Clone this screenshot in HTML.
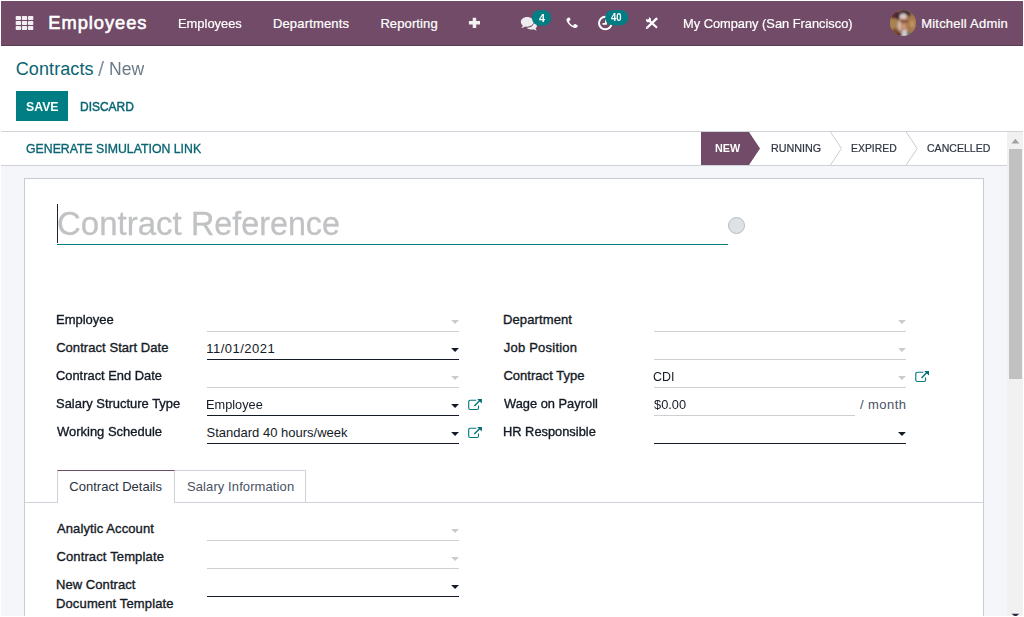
<!DOCTYPE html>
<html lang="en">
<head>
<meta charset="utf-8">
<title>Odoo - Contracts / New</title>
<style>
html,body{margin:0;padding:0;}
body{width:1024px;height:617px;overflow:hidden;background:#fff;position:relative;font-family:"Liberation Sans",sans-serif;}
.a{position:absolute;}
.t{position:absolute;white-space:nowrap;transform-origin:0 0;font-family:"Liberation Sans",sans-serif;}
#nav{left:1px;top:1px;width:1022px;height:44px;background:#714b67;border-bottom:1px solid #5b3c53;}
#bg{left:1px;top:166px;width:1006px;height:450px;background:#f5f6fa;}
#sheet{left:24px;top:178px;width:958px;height:437px;background:#fff;border:1px solid #c9ccd4;border-bottom:none;}
.hl{position:absolute;height:1px;}
.lt{background:#cfcfd2;}
.dk{background:#141a26;}
</style>
</head>
<body>
<div class="a" id="nav"></div>
<!-- control panel borders -->
<div class="hl" style="left:1px;top:131px;width:1022px;background:#cfd2d8;"></div>
<div class="hl" style="left:1px;top:165px;width:1006px;background:#cfd2d8;"></div>
<div class="a" id="bg"></div>
<div class="a" id="sheet"></div>

<!-- scrollbar -->
<div class="a" style="left:1007px;top:132px;width:16px;height:484px;background:#f1f1f1;"></div>
<div class="a" style="left:1009px;top:149px;width:13px;height:230px;background:#c1c1c1;"></div>
<svg class="a" style="left:1007px;top:132px;" width="16" height="484" viewBox="0 0 16 484">
<path d="M4.5 11.5 L8.4 6.8 L12.3 11.5 Z" fill="#a3a0a3"/>
<path d="M4.5 481.8 L12.4 481.8 L9.6 484 L7.3 484 Z" fill="#2a2a3a"/>
</svg>

<!-- navbar icons -->
<svg class="a" style="left:0;top:0;" width="1024" height="46" viewBox="0 0 1024 46">
<g fill="#f1eef1">
<rect x="15.7" y="15.9" width="5.3" height="4.2" rx="0.8"/><rect x="21.85" y="15.9" width="5.3" height="4.2" rx="0.8"/><rect x="28" y="15.9" width="5.3" height="4.2" rx="0.8"/>
<rect x="15.7" y="20.9" width="5.3" height="4.2" rx="0.8"/><rect x="21.85" y="20.9" width="5.3" height="4.2" rx="0.8"/><rect x="28" y="20.9" width="5.3" height="4.2" rx="0.8"/>
<rect x="15.7" y="25.9" width="5.3" height="4.2" rx="0.8"/><rect x="21.85" y="25.9" width="5.3" height="4.2" rx="0.8"/><rect x="28" y="25.9" width="5.3" height="4.2" rx="0.8"/>
</g>
<!-- plus -->
<path d="M472.7 17.700h3.500v3.300h3.800v3.500h-3.800v3.500h-3.500v-3.500h-3.800v-3.500h3.800z" fill="#f2f0f2"/>
<!-- comments -->
<g fill="#efecef">
<path d="M533.5 21.5 c1.9 0.7 3.5 2.2 3.5 4 c0 1.2 -0.6 2.2 -1.5 3 c0.3 0.8 0.8 1.4 1.4 1.9 c-1.3 0 -2.6 -0.4 -3.6 -1.1 c-0.6 0.1 -1.2 0.2 -1.8 0.2 c-2 0 -3.700 -0.7 -4.8 -1.800 c0.3 0 0.5 0 0.800 0 c3.700 0 6.300 -2.400 6.300 -5.200 c0 -0.350 -0.100 -0.700 -0.200 -1z"/>
<path d="M527.15 16.900 c3.500 0 6.350 2.200 6.350 4.950 s-2.850 4.950 -6.350 4.950 c-0.700 0 -1.400 -0.100 -2.000 -0.250 c-1.000 0.800 -2.400 1.300 -3.900 1.350 c0.700 -0.600 1.300 -1.400 1.600 -2.300 c-1.250 -0.900 -2.050 -2.250 -2.050 -3.750 c0 -2.750 2.850 -4.950 6.350 -4.950z"/>
</g>
<rect x="532" y="10" width="19" height="15.800" rx="7.900" fill="#017e84"/>
<!-- phone -->
<path d="M569.000 17.600 c-0.700 0.200 -2.000 0.800 -2.400 1.500 c-0.400 1.000 0.300 3.000 2.000 5.000 c1.800 2.200 4.400 3.900 6.300 3.900 c1.200 0 2.400 -0.900 2.800 -1.800 c0.200 -0.400 0.100 -0.700 -0.200 -0.900 l-2.300 -1.300 c-0.350 -0.200 -0.700 -0.100 -0.950 0.200 l-0.850 1.050 c-0.250 0.300 -0.600 0.300 -0.900 0.150 c-1.500 -0.800 -2.700 -2.000 -3.400 -3.500 c-0.150 -0.300 -0.100 -0.650 0.200 -0.900 l0.950 -0.750 c0.300 -0.250 0.400 -0.600 0.250 -0.950 l-0.900 -1.500 c-0.150 -0.250 -0.350 -0.300 -0.600 -0.200z" fill="#fff"/>
<!-- clock -->
<circle cx="605.300" cy="23.050" r="6.300" fill="none" stroke="#fff" stroke-width="2"/>
<path d="M605.100 19.500 h1.700 v5.300 h-4.300 v-1.700 h2.600z" fill="#fff"/>
<rect x="605.200" y="10" width="23" height="15.300" rx="7.650" fill="#017e84"/>
<!-- tools -->
<path d="M657.1 18.2 L647.3 27.5" stroke="#fff" stroke-width="2.4" fill="none"/>
<path d="M645.8 29 L646.4 26.6 L648.3 28.400 Z" fill="#fff"/>
<path d="M650 21.2 L657 27.8" stroke="#fff" stroke-width="2.1" fill="none"/>
<circle cx="648.5" cy="19.7" r="2.55" fill="#fff"/>
<circle cx="647.6" cy="18.200" r="1.4" fill="#714b67"/>
<!-- avatar -->
<defs><clipPath id="av"><circle cx="903" cy="23" r="13"/></clipPath>
<filter id="bl" x="-20%" y="-20%" width="140%" height="140%"><feGaussianBlur stdDeviation="0.8"/></filter></defs>
<g clip-path="url(#av)">
<rect x="889" y="9" width="28" height="28" fill="#9a7146"/>
<g filter="url(#bl)">
<rect x="889" y="19" width="8" height="10" fill="#a8824f"/>
<ellipse cx="894.500" cy="14.500" rx="4.500" ry="4" fill="#5a2a38"/>
<path d="M896.500 19 C896.500 12.500 900 10.500 904 10.500 C909 10.500 911 13 911 18 L908.500 18 C907.500 14.500 905.500 13.500 902.500 13.500 C900.500 13.500 899.500 15.500 899 20 Z" fill="#2c1d33"/>
<ellipse cx="903.200" cy="16.800" rx="3.600" ry="3.200" fill="#dcc7c4"/>
<ellipse cx="903" cy="25" rx="4.800" ry="6.500" fill="#b9825f"/>
<rect x="899" y="20.500" width="8.500" height="1.800" fill="#5a3030"/>
<ellipse cx="899.300" cy="26" rx="1.600" ry="5.500" fill="#d8c0b4"/>
<ellipse cx="903.500" cy="26.500" rx="1.500" ry="2" fill="#d0a080"/>
<path d="M902 31 L906.500 28.500 L907.500 37 L901 37 Z" fill="#cfcdd3"/>
<rect x="908.500" y="16" width="8" height="16" fill="#a97a4c"/>
<rect x="910" y="21" width="4" height="6" fill="#bd9468"/>
<ellipse cx="909" cy="34" rx="2.500" ry="1.600" fill="#4f6f70"/>
<ellipse cx="895.500" cy="32" rx="4" ry="3.500" fill="#7a4a35"/>
<ellipse cx="899" cy="35" rx="3" ry="2" fill="#5a2a30"/>
</g>
</g>
</svg>

<!-- SAVE button -->
<div class="a" style="left:16px;top:91px;width:52px;height:30px;background:#017e84;"></div>

<!-- statusbar -->
<svg class="a" style="left:690px;top:132px;" width="317" height="33" viewBox="690 132 317 33">
<path d="M701 132 H749 L760 148.500 L749 165 H701 Z" fill="#714b67"/>
<path d="M830.500 132 L841.500 148.500 L830.500 165" fill="none" stroke="#caccd2" stroke-width="1"/>
<path d="M906.200 132 L917.200 148.500 L906.200 165" fill="none" stroke="#caccd2" stroke-width="1"/>
</svg>

<!-- title -->
<div class="a" style="left:57px;top:204px;width:1px;height:39px;background:#1b2230;"></div>
<div class="hl" style="left:57px;top:244px;width:671px;background:#017e84;"></div>
<div class="a" style="left:728px;top:217px;width:15px;height:15px;border-radius:50%;background:#dde2e6;border:1px solid #b9babd;"></div>

<!-- field lines left -->
<div class="hl lt" style="left:207px;top:331px;width:252px;"></div>
<div class="hl dk" style="left:207px;top:359px;width:252px;"></div>
<div class="hl lt" style="left:207px;top:387px;width:252px;"></div>
<div class="hl dk" style="left:207px;top:415px;width:252px;"></div>
<div class="hl dk" style="left:207px;top:443px;width:252px;"></div>
<!-- field lines right -->
<div class="hl lt" style="left:654px;top:331px;width:252px;"></div>
<div class="hl lt" style="left:654px;top:359px;width:252px;"></div>
<div class="hl lt" style="left:654px;top:387px;width:252px;"></div>
<div class="hl lt" style="left:654px;top:415px;width:201px;"></div>
<div class="hl dk" style="left:654px;top:443px;width:252px;"></div>

<!-- carets and external link icons -->
<svg class="a" style="left:0;top:300px;" width="1024" height="317" viewBox="0 300 1024 317">
<defs><g id="ext" fill="none" stroke="#017780">
<path d="M8.3 2.3 H2.2 a1.5 1.5 0 0 0 -1.5 1.5 V10 a1.5 1.5 0 0 0 1.5 1.5 H9 a1.5 1.5 0 0 0 1.5 -1.5 V7.5" stroke-width="1.1"/>
<path d="M6.4 8 L12 2.3" stroke-width="1.5"/>
<path d="M9.2 0.9 H13.9 V5.4 Z" fill="#016a72" stroke="none"/>
</g></defs>
<use href="#ext" x="468" y="398"/>
<use href="#ext" x="468" y="426"/>
<use href="#ext" x="915.1" y="370"/>
<path d="M451.1 320 h7.9 l-3.95 4.1 z" fill="#c9cbce"/>
<path d="M451.1 348 h7.9 l-3.95 4.1 z" fill="#141a26"/>
<path d="M451.1 376 h7.9 l-3.95 4.1 z" fill="#c9cbce"/>
<path d="M451.1 404 h7.9 l-3.95 4.1 z" fill="#141a26"/>
<path d="M451.1 432 h7.9 l-3.95 4.1 z" fill="#141a26"/>
<path d="M451.1 529 h7.9 l-3.95 4.1 z" fill="#c9cbce"/>
<path d="M451.1 557 h7.9 l-3.95 4.1 z" fill="#c9cbce"/>
<path d="M451.1 585 h7.9 l-3.95 4.1 z" fill="#141a26"/>
<path d="M898.0 320 h7.9 l-3.95 4.1 z" fill="#c9cbce"/>
<path d="M898.0 348 h7.9 l-3.95 4.1 z" fill="#c9cbce"/>
<path d="M898.0 376 h7.9 l-3.95 4.1 z" fill="#c9cbce"/>
<path d="M898.0 432 h7.9 l-3.95 4.1 z" fill="#141a26"/>
</svg>

<!-- tabs -->
<div class="hl" style="left:25px;top:502px;width:958px;background:#cfd2d8;"></div>
<div class="a" style="left:57px;top:470px;width:116px;height:32px;background:#fff;border:1px solid #cfd2d8;border-top-color:#714b67;border-bottom:none;box-sizing:content-box;"></div>
<div class="a" style="left:175px;top:470px;width:130px;height:32px;border:1px solid #cfd2d8;border-left:none;border-bottom:none;"></div>

<!-- lines tab content -->
<div class="hl lt" style="left:207px;top:540px;width:252px;"></div>
<div class="hl lt" style="left:207px;top:568px;width:252px;"></div>
<div class="hl dk" style="left:207px;top:596px;width:252px;"></div>

<span class="t" style="left:48.37px;top:14.00px;font-size:18.3px;line-height:18.3px;color:#fff;letter-spacing:0.959px;-webkit-text-stroke:0.6px;">Employees</span>
<span class="t" style="left:177.89px;top:17.00px;font-size:13px;line-height:13px;color:#fff;transform:scaleX(0.9923);-webkit-text-stroke:0.22px;">Employees</span>
<span class="t" style="left:272.88px;top:17.00px;font-size:13px;line-height:13px;color:#fff;letter-spacing:0.170px;-webkit-text-stroke:0.22px;">Departments</span>
<span class="t" style="left:380.38px;top:17.00px;font-size:13px;line-height:13px;color:#fff;letter-spacing:0.110px;-webkit-text-stroke:0.22px;">Reporting</span>
<span class="t" style="left:682.70px;top:17.00px;font-size:13px;line-height:13px;color:#fff;transform:scaleX(0.9862);-webkit-text-stroke:0.22px;">My Company (San Francisco)</span>
<span class="t" style="left:921.18px;top:17.00px;font-size:13px;line-height:13px;color:#fff;letter-spacing:0.217px;-webkit-text-stroke:0.22px;">Mitchell Admin</span>
<span class="t" style="left:538.54px;top:14.00px;font-size:10.3px;line-height:10.3px;color:#fff;transform:scaleX(1.0450);font-weight:700;">4</span>
<span class="t" style="left:611.16px;top:13.00px;font-size:10.3px;line-height:10.3px;color:#fff;transform:scaleX(0.9242);font-weight:700;">40</span>
<span class="t" style="left:15.76px;top:60.00px;font-size:18px;line-height:18px;color:#0a6473;letter-spacing:0.097px;">Contracts</span>
<span class="t" style="left:97.80px;top:59.00px;font-size:20px;line-height:20px;color:#8a939d;transform:scaleX(1.1022);">/</span>
<span class="t" style="left:108.63px;top:60.00px;font-size:18px;line-height:18px;color:#6b7a88;transform:scaleX(0.9764);">New</span>
<span class="t" style="left:25.81px;top:100.00px;font-size:13.4px;line-height:13.4px;color:#fff;transform:scaleX(0.9160);font-weight:700;">SAVE</span>
<span class="t" style="left:80.46px;top:100.00px;font-size:13.4px;line-height:13.4px;color:#0a6473;transform:scaleX(0.8946);-webkit-text-stroke:0.5px;">DISCARD</span>
<span class="t" style="left:25.67px;top:142.00px;font-size:13.4px;line-height:13.4px;color:#0a6473;transform:scaleX(0.9180);-webkit-text-stroke:0.35px;">GENERATE SIMULATION LINK</span>
<span class="t" style="left:714.79px;top:143.00px;font-size:11.4px;line-height:11.4px;color:#fff;transform:scaleX(0.9483);font-weight:700;">NEW</span>
<span class="t" style="left:770.85px;top:143.00px;font-size:11.4px;line-height:11.4px;color:#2f3542;transform:scaleX(0.9440);-webkit-text-stroke:0.22px;">RUNNING</span>
<span class="t" style="left:851.28px;top:143.00px;font-size:11.4px;line-height:11.4px;color:#2f3542;transform:scaleX(0.9133);-webkit-text-stroke:0.22px;">EXPIRED</span>
<span class="t" style="left:927.49px;top:143.00px;font-size:11.4px;line-height:11.4px;color:#2f3542;transform:scaleX(0.9266);-webkit-text-stroke:0.22px;">CANCELLED</span>
<span class="t" style="left:57.25px;top:207.00px;font-size:33px;line-height:33px;color:#c1c2c4;transform:scaleX(0.9993);-webkit-text-stroke:0.3px;">Contract</span>
<span class="t" style="left:191.18px;top:207.00px;font-size:33px;line-height:33px;color:#c1c2c4;transform:scaleX(0.9782);-webkit-text-stroke:0.3px;">Reference</span>
<span class="t" style="left:55.73px;top:313.00px;font-size:13px;line-height:13px;color:#141a26;transform:scaleX(0.9997);-webkit-text-stroke:0.35px;">Employee</span>
<span class="t" style="left:56.14px;top:341.00px;font-size:13px;line-height:13px;color:#141a26;letter-spacing:0.062px;-webkit-text-stroke:0.35px;">Contract Start Date</span>
<span class="t" style="left:56.15px;top:369.00px;font-size:13px;line-height:13px;color:#141a26;transform:scaleX(0.9900);-webkit-text-stroke:0.35px;">Contract End Date</span>
<span class="t" style="left:56.35px;top:397.00px;font-size:13px;line-height:13px;color:#141a26;transform:scaleX(0.9954);-webkit-text-stroke:0.35px;">Salary Structure Type</span>
<span class="t" style="left:56.75px;top:425.00px;font-size:13px;line-height:13px;color:#141a26;transform:scaleX(0.9977);-webkit-text-stroke:0.35px;">Working Schedule</span>
<span class="t" style="left:502.98px;top:313.00px;font-size:13px;line-height:13px;color:#141a26;letter-spacing:0.117px;-webkit-text-stroke:0.35px;">Department</span>
<span class="t" style="left:503.80px;top:341.00px;font-size:13px;line-height:13px;color:#141a26;letter-spacing:0.215px;-webkit-text-stroke:0.35px;">Job Position</span>
<span class="t" style="left:503.39px;top:369.00px;font-size:13px;line-height:13px;color:#141a26;letter-spacing:0.038px;-webkit-text-stroke:0.35px;">Contract Type</span>
<span class="t" style="left:504.00px;top:397.00px;font-size:13px;line-height:13px;color:#141a26;transform:scaleX(0.9889);-webkit-text-stroke:0.35px;">Wage on Payroll</span>
<span class="t" style="left:503.00px;top:425.00px;font-size:13px;line-height:13px;color:#141a26;transform:scaleX(0.9877);-webkit-text-stroke:0.35px;">HR Responsible</span>
<span class="t" style="left:206.19px;top:342.00px;font-size:13px;line-height:13px;color:#141a26;letter-spacing:0.499px;">11/01/2021</span>
<span class="t" style="left:206.00px;top:398.00px;font-size:13px;line-height:13px;color:#141a26;transform:scaleX(0.9819);">Employee</span>
<span class="t" style="left:206.59px;top:426.00px;font-size:13px;line-height:13px;color:#141a26;letter-spacing:0.001px;">Standard 40 hours/week</span>
<span class="t" style="left:653.42px;top:370.00px;font-size:13px;line-height:13px;color:#141a26;transform:scaleX(0.9585);">CDI</span>
<span class="t" style="left:654.00px;top:398.00px;font-size:13px;line-height:13px;color:#141a26;transform:scaleX(0.9858);">$0.00</span>
<span class="t" style="left:860.00px;top:398.00px;font-size:13px;line-height:13px;color:#4a5263;letter-spacing:0.438px;">/ month</span>
<span class="t" style="left:69.29px;top:480.00px;font-size:13px;line-height:13px;color:#2b3140;letter-spacing:0.016px;">Contract Details</span>
<span class="t" style="left:186.99px;top:480.00px;font-size:13px;line-height:13px;color:#4a5263;letter-spacing:0.097px;">Salary Information</span>
<span class="t" style="left:57.00px;top:522.00px;font-size:13px;line-height:13px;color:#141a26;letter-spacing:0.097px;-webkit-text-stroke:0.35px;">Analytic Account</span>
<span class="t" style="left:56.39px;top:550.00px;font-size:13px;line-height:13px;color:#141a26;letter-spacing:0.140px;-webkit-text-stroke:0.35px;">Contract Template</span>
<span class="t" style="left:55.98px;top:578.00px;font-size:13px;line-height:13px;color:#141a26;letter-spacing:0.066px;-webkit-text-stroke:0.35px;">New Contract</span>
<span class="t" style="left:55.98px;top:597.00px;font-size:13px;line-height:13px;color:#141a26;letter-spacing:0.140px;-webkit-text-stroke:0.35px;">Document Template</span>
</body>
</html>
